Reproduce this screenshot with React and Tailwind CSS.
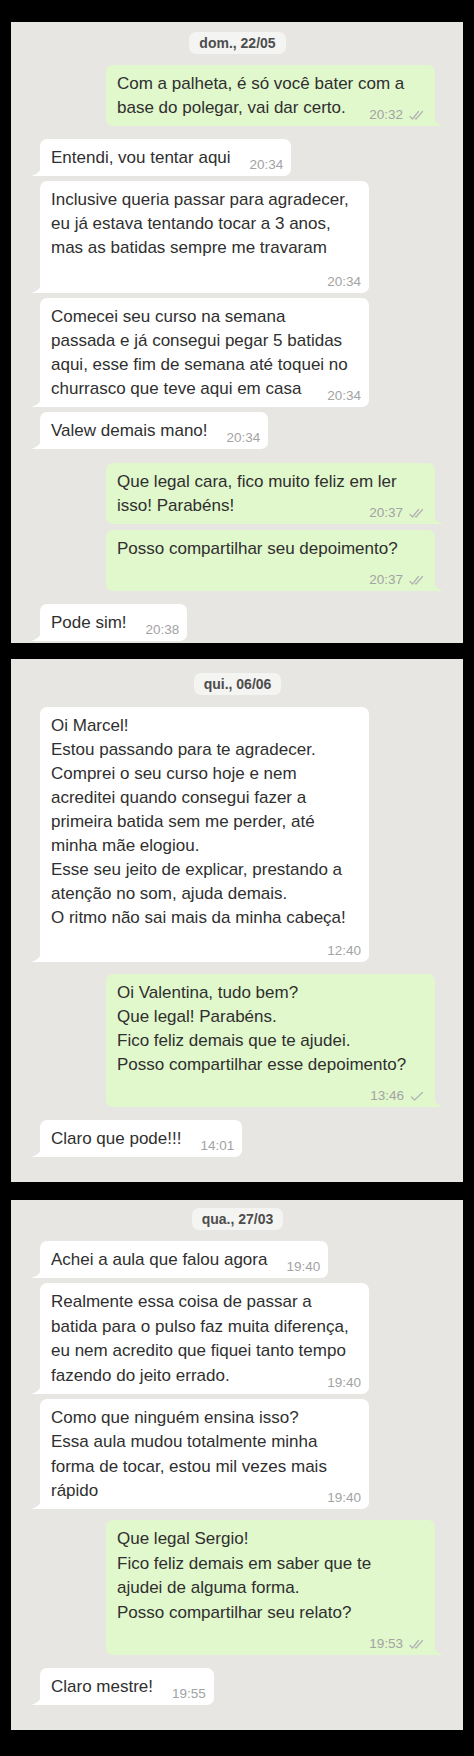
import clsx from 'clsx';

// marcas de leitura
const DoubleCheck = () => (
    <svg width="16" height="11" viewBox="0 0 16 11" fill="none" stroke="#b4b4b4" strokeWidth="1.3" strokeLinecap="round" strokeLinejoin="round">
        <path d="M1 6.5 L3.5 9 L9.5 1.5" />
        <path d="M6.5 8.5 L7 9 L13.5 1.5" />
    </svg>
);

const SingleCheck = () => (
    <svg width="15" height="11" viewBox="0 0 15 11" fill="none" stroke="#b4b4b4" strokeWidth="1.3" strokeLinecap="round" strokeLinejoin="round">
        <path d="M1.5 6 L4.5 9 L12.5 1.5" />
    </svg>
);

const Time = ({ time, check, className }) => (
    <span className={clsx('flex h-[16px] shrink-0 items-center gap-[6px] whitespace-nowrap text-[13.5px] leading-[16px] text-[#a3a3a3]', className)}>
        {time}
        {check === 'double' && <DoubleCheck />}
        {check === 'single' && <SingleCheck />}
    </span>
);

const Bubble = ({ out, lines, time, check, inline, mt, tsMt = 'mt-[12px]', lh }) => {
    const body = inline ? lines.slice(0, -1) : lines;
    const last = lines[lines.length - 1];
    return (
        <div
            className={clsx(
                'relative rounded-[7px] pb-[3px] pl-[11px] pt-[7px] text-[17px] text-[#2f2f2f]',
                out ? 'self-end rounded-br-none bg-[#e1f7cc] pr-[10px]' : 'self-start rounded-bl-none bg-white pr-[8px]',
                (lines.length > 1 || !inline) && 'w-[329px]',
                mt
            )}
        >
            {body.map((l, i) => (
                <div key={i} className={clsx('whitespace-nowrap', lh)}>{l}</div>
            ))}
            {inline ? (
                <div className="flex items-start justify-between">
                    <span className={clsx('whitespace-nowrap', lh)}>{last}</span>
                    <Time time={time} check={check} className="ml-[19px] mt-[11px]" />
                </div>
            ) : (
                <div className={clsx('flex justify-end', tsMt)}>
                    <Time time={time} check={check} />
                </div>
            )}
            {/* rabinho do balão */}
            {out ? (
                <svg className="absolute bottom-0 right-[-8px]" width="9" height="10" viewBox="0 0 9 10">
                    <path d="M0 0 C0 5 4 8.5 9 9.5 L8 10 L0 10 Z" fill="#e1f7cc" />
                </svg>
            ) : (
                <svg className="absolute bottom-0 left-[-8px]" width="9" height="10" viewBox="0 0 9 10">
                    <path d="M9 0 C9 5 5 8.5 0 9.5 L1 10 L9 10 Z" fill="#ffffff" />
                </svg>
            )}
        </div>
    );
};

const Chip = ({ label }) => (
    <div className="h-[22px] self-center rounded-[7px] bg-[#f4f4f2] px-[10px] text-[14px] font-bold leading-[22px] text-[#4d4d4d]">
        {label}
    </div>
);

const chats = [
    {
        date: 'dom., 22/05',
        panel: 'pt-[10px] pb-[2px]',
        lh: 'leading-[24px]',
        msgs: [
            { out: true, inline: true, mt: 'mt-[11px]', time: '20:32', check: 'double', lines: ['Com a palheta, é só você bater com a', 'base do polegar, vai dar certo.'] },
            { inline: true, mt: 'mt-[13px]', time: '20:34', lines: ['Entendi, vou tentar aqui'] },
            { mt: 'mt-[5px]', tsMt: 'mt-[14px]', time: '20:34', lines: ['Inclusive queria passar para agradecer,', 'eu já estava tentando tocar a 3 anos,', 'mas as batidas sempre me travaram'] },
            { inline: true, mt: 'mt-[5px]', time: '20:34', lines: ['Comecei seu curso na semana', 'passada e já consegui pegar 5 batidas', 'aqui, esse fim de semana até toquei no', 'churrasco que teve aqui em casa'] },
            { inline: true, mt: 'mt-[5px]', time: '20:34', lines: ['Valew demais mano!'] },
            { out: true, inline: true, mt: 'mt-[14px]', time: '20:37', check: 'double', lines: ['Que legal cara, fico muito feliz em ler', 'isso! Parabéns!'] },
            { out: true, mt: 'mt-[6px]', tsMt: 'mt-[11px]', time: '20:37', check: 'double', lines: ['Posso compartilhar seu depoimento?'] },
            { inline: true, mt: 'mt-[13px]', time: '20:38', lines: ['Pode sim!'] },
        ],
    },
    {
        date: 'qui., 06/06',
        panel: 'mt-[16px] pt-[14px] pb-[25px]',
        lh: 'leading-[24px]',
        msgs: [
            { mt: 'mt-[12px]', tsMt: 'mt-[13px]', time: '12:40', lines: ['Oi Marcel!', 'Estou passando para te agradecer.', 'Comprei o seu curso hoje e nem', 'acreditei quando consegui fazer a', 'primeira batida sem me perder, até', 'minha mãe elogiou.', 'Esse seu jeito de explicar, prestando a', 'atenção no som, ajuda demais.', 'O ritmo não sai mais da minha cabeça!'] },
            { out: true, mt: 'mt-[12px]', tsMt: 'mt-[11px]', time: '13:46', check: 'single', lines: ['Oi Valentina, tudo bem?', 'Que legal! Parabéns.', 'Fico feliz demais que te ajudei.', 'Posso compartilhar esse depoimento?'] },
            { inline: true, mt: 'mt-[13px]', time: '14:01', lines: ['Claro que pode!!!'] },
        ],
    },
    {
        date: 'qua., 27/03',
        panel: 'mt-[18px] pt-[8px] pb-[25px]',
        lh: 'leading-[24.5px]',
        msgs: [
            { inline: true, mt: 'mt-[11px]', time: '19:40', lines: ['Achei a aula que falou agora'] },
            { inline: true, mt: 'mt-[5px]', time: '19:40', lines: ['Realmente essa coisa de passar a', 'batida para o pulso faz muita diferença,', 'eu nem acredito que fiquei tanto tempo', 'fazendo do jeito errado.'] },
            { inline: true, mt: 'mt-[5px]', time: '19:40', lines: ['Como que ninguém ensina isso?', 'Essa aula mudou totalmente minha', 'forma de tocar, estou mil vezes mais', 'rápido'] },
            { out: true, mt: 'mt-[11px]', tsMt: 'mt-[11px]', time: '19:53', check: 'double', lines: ['Que legal Sergio!', 'Fico feliz demais em saber que te', 'ajudei de alguma forma.', 'Posso compartilhar seu relato?'] },
            { inline: true, mt: 'mt-[13px]', time: '19:55', lines: ['Claro mestre!'] },
        ],
    },
];

const App = () => {
    return (
        <main className="min-h-screen bg-black px-[11px] py-[22px] font-['Liberation_Sans',Arial,sans-serif]">
            {chats.map((chat) => (
                <section key={chat.date} className={clsx('flex flex-col bg-[#e8e6e2] pl-[29px] pr-[28px]', chat.panel)}>
                    <Chip label={chat.date} />
                    {chat.msgs.map((m, i) => (
                        <Bubble key={i} {...m} lh={chat.lh} />
                    ))}
                </section>
            ))}
        </main>
    );
};

export default App;
